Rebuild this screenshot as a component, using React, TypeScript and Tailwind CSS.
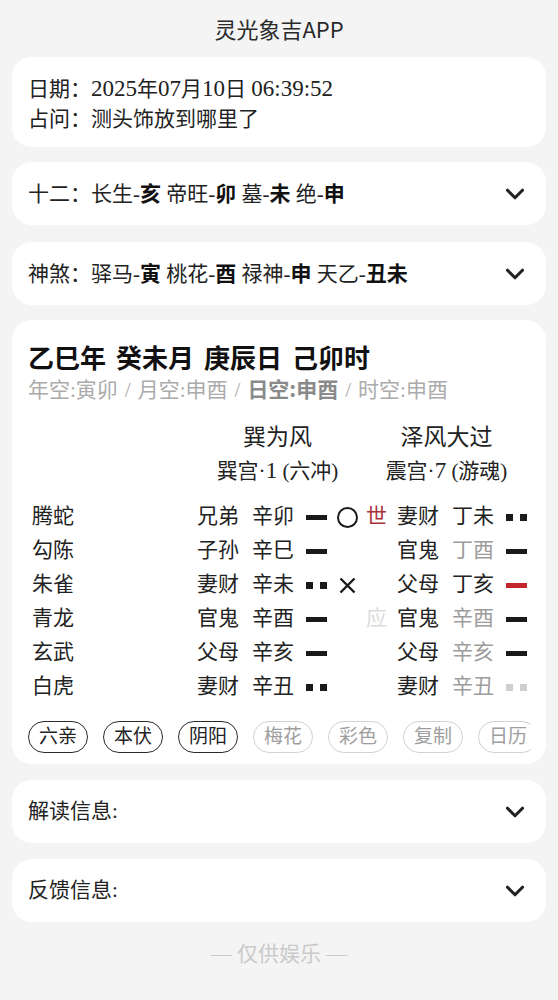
import { ChevronDown } from 'lucide-react';

type Yao = 'yang' | 'yin';

interface Row {
  beast: string;
  lq: string;
  gz: string;
  yao: Yao;
  mark?: 'o' | 'x';
  sy?: 'shi' | 'ying';
  rlq: string;
  rgz: string;
  rgzGray: boolean;
  ryao: Yao;
  ryaoTone: 'dark' | 'red' | 'light';
}

const rows: Row[] = [
  { beast: '腾蛇', lq: '兄弟', gz: '辛卯', yao: 'yang', mark: 'o', sy: 'shi', rlq: '妻财', rgz: '丁未', rgzGray: false, ryao: 'yin', ryaoTone: 'dark' },
  { beast: '勾陈', lq: '子孙', gz: '辛巳', yao: 'yang', rlq: '官鬼', rgz: '丁酉', rgzGray: true, ryao: 'yang', ryaoTone: 'dark' },
  { beast: '朱雀', lq: '妻财', gz: '辛未', yao: 'yin', mark: 'x', rlq: '父母', rgz: '丁亥', rgzGray: false, ryao: 'yang', ryaoTone: 'red' },
  { beast: '青龙', lq: '官鬼', gz: '辛酉', yao: 'yang', sy: 'ying', rlq: '官鬼', rgz: '辛酉', rgzGray: true, ryao: 'yang', ryaoTone: 'dark' },
  { beast: '玄武', lq: '父母', gz: '辛亥', yao: 'yang', rlq: '父母', rgz: '辛亥', rgzGray: true, ryao: 'yang', ryaoTone: 'dark' },
  { beast: '白虎', lq: '妻财', gz: '辛丑', yao: 'yin', rlq: '妻财', rgz: '辛丑', rgzGray: true, ryao: 'yin', ryaoTone: 'light' },
];

const toggles = [
  { label: '六亲', on: true },
  { label: '本伏', on: true },
  { label: '阴阳', on: true },
  { label: '梅花', on: false },
  { label: '彩色', on: false },
  { label: '复制', on: false },
  { label: '日历', on: false },
];

function YaoMark({ type, tone }: { type: Yao; tone: 'dark' | 'red' | 'light' }) {
  const color = tone === 'red' ? 'bg-[#c4262e]' : tone === 'light' ? 'bg-[#cfcfcf]' : 'bg-[#1a1a1a]';
  if (type === 'yang') {
    return <div className={`w-[21px] h-[5px] ${color}`} />;
  }
  return (
    <div className="w-[21px] flex justify-between">
      <div className={`w-[7px] h-[7px] ${color}`} />
      <div className={`w-[7px] h-[7px] ${color}`} />
    </div>
  );
}

function Sans({ children }: { children: React.ReactNode }) {
  return <span className="font-['Noto_Sans_CJK_SC',sans-serif] font-bold text-[#111]">{children}</span>;
}

// serif digits in the reference run a bit wider than Liberation Serif at 21px
function Num({ children }: { children: React.ReactNode }) {
  return <span className="text-[23px]">{children}</span>;
}

function Sep() {
  return <span className="mx-[7px]">/</span>;
}

export default function App() {
  return (
    <div className="min-h-screen bg-[#f4f4f4] px-3 pb-8 font-['Liberation_Serif','Noto_Sans_CJK_SC',serif] text-[21px] text-[#222]">
      {/* Header */}
      <div className="h-[57px] flex items-center justify-center font-['Noto_Sans_CJK_SC',sans-serif] text-[22px] text-[#2a2a2a]">
        灵光象吉APP
      </div>

      {/* Date / question */}
      <div className="bg-white rounded-[20px] px-4 pt-[17px] pb-[13px] leading-[30px]">
        <div>
          日期：<Num>2025</Num>年<Num>07</Num>月<Num>10</Num>日 <Num>06:39:52</Num>
        </div>
        <div>占问：测头饰放到哪里了</div>
      </div>

      {/* 十二长生 */}
      <div className="mt-[15px] bg-white rounded-[20px] h-[63px] px-4 flex items-center justify-between">
        <div>
          十二：长生-<Sans>亥</Sans> 帝旺-<Sans>卯</Sans> 墓-<Sans>未</Sans> 绝-<Sans>申</Sans>
        </div>
        <ChevronDown size={30} strokeWidth={2.5} className="text-[#222]" />
      </div>

      {/* 神煞 */}
      <div className="mt-[17px] bg-white rounded-[20px] h-[63px] px-4 flex items-center justify-between">
        <div>
          神煞：驿马-<Sans>寅</Sans> 桃花-<Sans>酉</Sans> 禄神-<Sans>申</Sans> 天乙-<Sans>丑未</Sans>
        </div>
        <ChevronDown size={30} strokeWidth={2.5} className="text-[#222]" />
      </div>

      {/* 卦盘 */}
      <div className="mt-[15px] bg-white rounded-[20px] px-4 pt-5 pb-[11px]">
        <div className="flex gap-[10px] font-['Noto_Sans_CJK_SC',sans-serif] font-bold text-[26px] leading-[34px] text-[#111]">
          <span>乙巳年</span>
          <span>癸未月</span>
          <span>庚辰日</span>
          <span>己卯时</span>
        </div>
        <div className="mt-px leading-[26px] text-[#ababab] whitespace-nowrap">
          年空:寅卯<Sep />月空:申酉<Sep />
          <span className="font-['Noto_Sans_CJK_SC',sans-serif] font-bold text-[#8a8a8a]">日空:申酉</span>
          <Sep />时空:申酉
        </div>

        <div className="mt-[19px] flex">
          <div className="w-[169px] shrink-0" />
          <div className="w-[161px] flex flex-col items-center">
            <div className="text-[23px] leading-[32px]">巽为风</div>
            <div className="mt-[2px] leading-[30px]">
              巽宫·<Num>1</Num> (六冲)
            </div>
          </div>
          <div className="w-[8px] shrink-0" />
          <div className="w-[161px] flex flex-col items-center">
            <div className="text-[23px] leading-[32px]">泽风大过</div>
            <div className="mt-[2px] leading-[30px]">
              震宫·<Num>7</Num> (游魂)
            </div>
          </div>
        </div>

        <div className="mt-[14px]">
          {rows.map((r) => (
            <div key={r.beast} className="h-[34px] flex items-center">
              <div className="w-[169px] shrink-0 pl-1">{r.beast}</div>
              <div className="w-[42px]">{r.lq}</div>
              <div className="w-[42px] ml-[13px]">{r.gz}</div>
              <div className="ml-[12px]">
                <YaoMark type={r.yao} tone="dark" />
              </div>
              <div className="w-[22px] ml-[9px] flex items-center justify-center">
                {r.mark === 'o' && <div className="w-[21px] h-[21px] rounded-full border-2 border-[#1a1a1a]" />}
                {r.mark === 'x' && (
                  <svg width="17" height="17" viewBox="0 0 17 17">
                    <path d="M1.5 1.5 15.5 15.5 M15.5 1.5 1.5 15.5" stroke="#1a1a1a" strokeWidth="2.4" />
                  </svg>
                )}
              </div>
              <div className="w-[21px] ml-[8px]">
                {r.sy === 'shi' && <span className="text-[#a8323a]">世</span>}
                {r.sy === 'ying' && <span className="text-[#dcdcdc]">应</span>}
              </div>
              <div className="w-[42px] ml-[10px]">{r.rlq}</div>
              <div className={`w-[42px] ml-[13px] ${r.rgzGray ? 'text-[#9c9c9c]' : ''}`}>{r.rgz}</div>
              <div className="ml-[12px]">
                <YaoMark type={r.ryao} tone={r.ryaoTone} />
              </div>
            </div>
          ))}
        </div>

        <div className="mt-[17px] flex gap-[15px] overflow-hidden -mr-px">
          {toggles.map((t) => (
            <div
              key={t.label}
              className={`w-[60px] h-[32px] shrink-0 rounded-full flex items-center justify-center text-[19px] border-[1.5px] ${
                t.on ? 'border-[#2a2a2a] text-[#222]' : 'border-[#d2d2d2] text-[#9e9e9e]'
              }`}
            >
              {t.label}
            </div>
          ))}
        </div>
      </div>

      {/* 解读信息 */}
      <div className="mt-4 bg-white rounded-[20px] h-[63px] px-4 flex items-center justify-between">
        <div>解读信息:</div>
        <ChevronDown size={30} strokeWidth={2.5} className="text-[#222]" />
      </div>

      {/* 反馈信息 */}
      <div className="mt-4 bg-white rounded-[20px] h-[63px] px-4 flex items-center justify-between">
        <div>反馈信息:</div>
        <ChevronDown size={30} strokeWidth={2.5} className="text-[#222]" />
      </div>

      <div className="mt-[17px] leading-[30px] text-center text-[#cacaca]">— 仅供娱乐 —</div>
    </div>
  );
}
